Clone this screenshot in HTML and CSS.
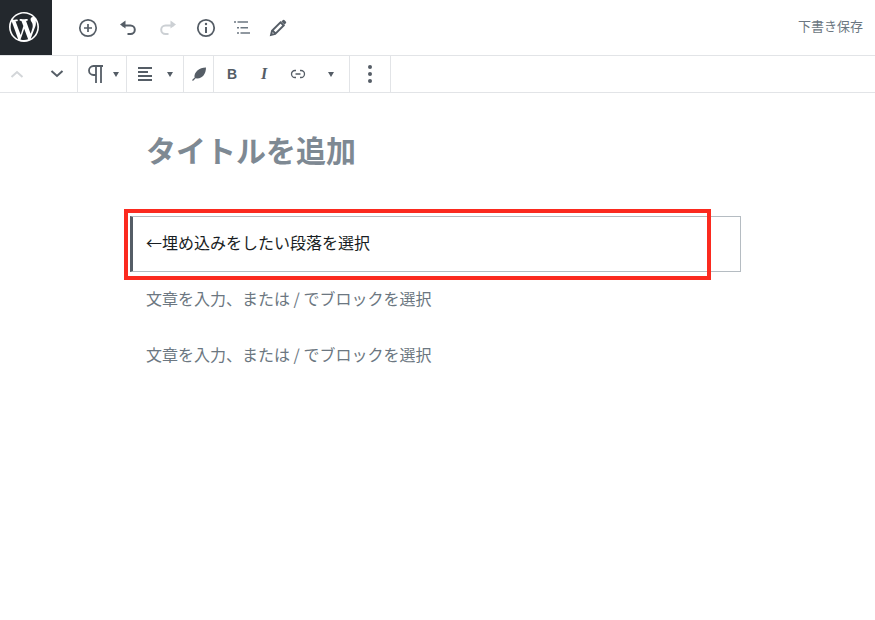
FILE: index.html
```html
<!DOCTYPE html>
<html lang="ja">
<head>
<meta charset="utf-8">
<title>編集</title>
<link rel="stylesheet" href="styles.css">
</head>
<body>
<div class="page">
  <header class="topbar">
    <div class="wp-tile">
      <svg class="wp-logo" viewBox="0 0 20 20" width="30" height="30"><path fill="#fff" d="M20 10c0-5.510-4.490-10-10-10C4.480 0 0 4.490 0 10c0 5.520 4.480 10 10 10 5.510 0 10-4.480 10-10zM7.780 15.370L4.370 6.220c.55-.02 1.170-.08 1.170-.08.5-.06.44-1.130-.06-1.110 0 0-1.450.11-2.370.11-.18 0-.37 0-.58-.01C4.120 2.690 6.890 1.050 10 1.050c2.320 0 4.430.88 6.020 2.360-.67-.11-1.630.39-1.630 1.530 0 .71.43 1.310.87 2.020.35.61.55 1.360.55 2.460 0 1.490-1.400 5-1.400 5l-3.030-8.370c.54-.02.82-.17.82-.17.5-.05.44-1.250-.06-1.220 0 0-1.440.12-2.380.12-.87 0-2.330-.12-2.330-.12-.5-.03-.56 1.200-.06 1.220l.92.08 1.260 3.410zM17.410 10c.24-.64.74-1.870.43-4.250.7 1.290 1.050 2.710 1.050 4.250 0 3.290-1.730 6.240-4.400 7.780.97-2.590 1.940-5.200 2.920-7.780zM6.100 18.090C3.120 16.650 1.110 13.530 1.110 10c0-1.300.23-2.480.72-3.590C3.250 10.300 4.670 14.200 6.100 18.090zm4.030-6.990l2.580 6.980c.01.040.03.080.05.120-.9.320-1.820.48-2.760.48-.81 0-1.550-.1-2.360-.36 1-2.660 1.830-4.880 2.490-7.220z"/></svg>
    </div>
    <div class="tools">
      <svg class="icon i-add" viewBox="0 0 24 24" width="24" height="24"><circle cx="12" cy="12" r="8.2" fill="none" stroke="#555d66" stroke-width="1.7"/><path d="M12 8v8M8 12h8" stroke="#555d66" stroke-width="1.7" fill="none"/></svg>
      <svg class="icon i-undo" viewBox="0 0 24 24" width="24" height="24"><path d="M6.500 9.500h8a4.300 4.300 0 0 1 0 8.600h-3" fill="none" stroke="#555d66" stroke-width="2"/><path d="M9.500 4.500v8L4 8.500z" fill="#555d66"/></svg>
      <svg class="icon i-redo" viewBox="0 0 24 24" width="24" height="24"><path d="M17.500 9.500h-8a4.300 4.300 0 0 0 0 8.600h3" fill="none" stroke="#ccd0d4" stroke-width="2"/><path d="M14.500 4.500v8l5.500-4z" fill="#ccd0d4"/></svg>
      <svg class="icon i-info" viewBox="0 0 24 24" width="24" height="24"><circle cx="12" cy="12" r="8.200" fill="none" stroke="#555d66" stroke-width="1.800"/><path d="M12 11v6" stroke="#555d66" stroke-width="2"/><circle cx="12" cy="8" r="1.200" fill="#555d66"/></svg>
      <svg class="icon i-outline" viewBox="0 0 24 24" width="24" height="24"><path d="M4 6h2M7.500 6H18M7 11.700h2M10.500 11.700H18M7 17h2M10.500 17H20" stroke="#6c7781" stroke-width="1.400" fill="none"/></svg>
      <svg class="icon i-pencil" viewBox="0 0 24 24" width="24" height="24"><path d="M5 19l1-4.200L14.500 6.300l3.200 3.200L9.200 18z M6.500 14.500l3 3" fill="none" stroke="#555d66" stroke-width="1.900"/><path d="M15.300 5.500l1.700-1.500a1 1 0 0 1 1.300 0l1.700 1.700a1 1 0 0 1 0 1.300l-1.500 1.700z" fill="#555d66"/></svg>
    </div>
    <span class="save">下書き保存</span>
  </header>
  <nav class="blockbar">
    <div class="group g-move">
      <svg viewBox="0 0 14 8" width="14" height="8"><path d="M1.500 7L7 2l5.500 5" fill="none" stroke="#d3d6d9" stroke-width="2"/></svg>
      <svg viewBox="0 0 14 8" width="14" height="8"><path d="M1.500 1L7 6l5.500-5" fill="none" stroke="#555d66" stroke-width="2"/></svg>
    </div>
    <div class="group g-para">
      <svg viewBox="0 0 16 18" width="16" height="18"><path d="M15 1H5.500a4.500 4.500 0 0 0 0 9H8M8 1v17M13 1v17" fill="none" stroke="#555d66" stroke-width="1.800"/></svg>
      <span class="caret"></span>
    </div>
    <div class="group g-align">
      <svg viewBox="0 0 15 14" width="15" height="14"><path d="M0 1h14M0 5h10M0 9h14M0 13h14" stroke="#555d66" stroke-width="1.800" fill="none"/></svg>
      <span class="caret"></span>
    </div>
    <div class="group g-feather">
      <svg viewBox="0 0 14 14" width="14" height="14"><path d="M2.500 10C2 5.500 7 .5 14 .5 14 6.500 10.500 12 4.500 11.500z" fill="#555d66"/><path d="M.5 13.500L10 4" stroke="#555d66" stroke-width="1.200" fill="none"/></svg>
    </div>
    <div class="group g-format">
      <span class="fmt fmt-b">B</span>
      <span class="fmt fmt-i">I</span>
      <svg class="link" viewBox="0 0 16 10" width="16" height="10"><path d="M6 1.500H5a3.500 3.500 0 0 0 0 7h1M10 1.500h1a3.500 3.500 0 0 1 0 7h-1M5.500 5h5" fill="none" stroke="#555d66" stroke-width="1.300"/></svg>
      <span class="caret"></span>
    </div>
    <div class="group g-more">
      <span class="dot"></span><span class="dot"></span><span class="dot"></span>
    </div>
  </nav>
  <main class="editor">
    <h1 class="title">タイトルを追加</h1>
    <div class="block selected">←埋め込みをしたい段落を選択</div>
    <p class="block placeholder">文章を入力、または / でブロックを選択</p>
    <p class="block placeholder">文章を入力、または / でブロックを選択</p>
    <div class="highlight"></div>
  </main>
</div>
</body>
</html>
```
FILE: styles.css
```css
* { box-sizing: border-box; }
html, body { margin: 0; padding: 0; background: #fff; }
body { font-family: "Noto Sans CJK JP", "Noto Sans", sans-serif; overflow: hidden; }
.page { width: 875px; height: 620px; display: flex; flex-direction: column; }
.topbar { height: 56px; flex: none; display: flex; align-items: center; border-bottom: 1px solid #e2e4e7; }
.wp-tile { width: 52px; height: 55px; padding: 0 4px 1px 0; background: #23282d; display: flex; align-items: center; justify-content: center; flex: none; }
.tools { display: flex; align-items: center; margin-left: 24px; }
.tools .icon { display: block; flex: none; }
.i-undo, .i-redo { margin-left: 16px; }
.i-info { margin-left: 14px; }
.i-outline, .i-pencil { margin-left: 12px; }
.save { margin: 0 12px 4px auto; font-size: 13px; color: #6c7781; }
.blockbar { height: 37px; flex: none; display: flex; align-items: stretch; border-bottom: 1px solid #e2e4e7; }
.group { display: flex; align-items: center; border-right: 1px solid #e2e4e7; }
.g-move { width: 78px; padding-left: 10px; gap: 26px; }
.g-para { width: 49px; padding-left: 10px; gap: 9px; }
.g-align { width: 57px; padding-left: 11px; gap: 14px; }
.g-feather { width: 30px; padding-left: 8px; }
.g-format { width: 136px; padding-left: 13px; }
.g-more { width: 41px; flex-direction: column; justify-content: center; gap: 3px; }
.caret { width: 0; height: 0; border-left: 3px solid transparent; border-right: 3px solid transparent; border-top: 5px solid #555d66; }
.fmt { font-family: "Liberation Serif", serif; font-size: 16px; color: #555d66; font-weight: bold; }
.fmt-b { font-family: "Liberation Sans", sans-serif; font-size: 14px; width: 10px; }
.fmt-i { font-style: italic; margin-left: 24px; width: 8px; }
.link { margin-left: 21px; }
.g-format .caret { margin-left: 22px; }
.dot { width: 4px; height: 4px; border-radius: 50%; background: #555d66; }
.editor { position: relative; flex: 1; padding: 0 134px 0 130px; }
.title { margin: 31px 0 0 16px; font-size: 30px; line-height: 50px; font-weight: 700; color: #7e8993; height: 50px; }
.block { margin: 0; font-size: 16px; line-height: 28px; padding-left: 16px; }
.selected { margin-top: 42px; height: 56px; padding-top: 11px; padding-left: 13px; border: 1px solid #b5bcc2; border-left: 3px solid #555d66; color: #191e23; }
.placeholder { color: #6c7781; }
.selected + .placeholder { margin-top: 12px; }
.placeholder + .placeholder { margin-top: 28px; }
.highlight { position: absolute; left: 124px; top: 116px; width: 587px; height: 71px; border: 4px solid #fb2a1f; }
```
